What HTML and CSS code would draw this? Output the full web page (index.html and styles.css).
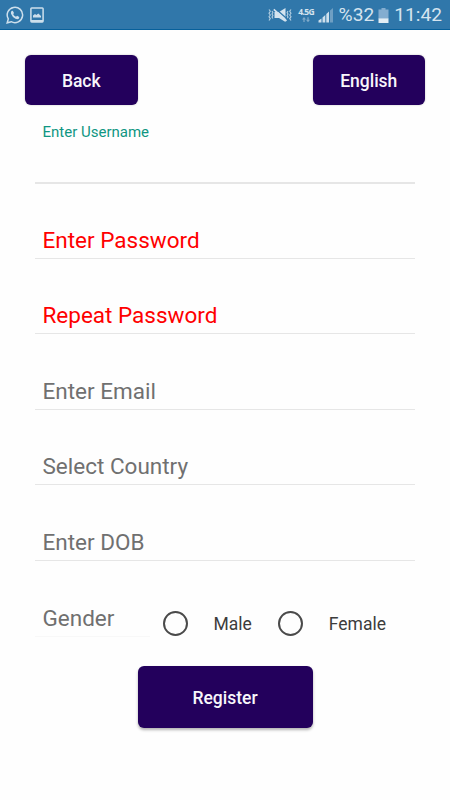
FILE: index.html
```html
<!DOCTYPE html>
<html lang="en">
<head>
	<meta charset="utf-8">
	<meta name="viewport" content="width=device-width, initial-scale=1">
	<title>Register</title>
	<link rel="stylesheet" href="styles.css">
</head>
<body>

<div class="statusbar">
	<div class="notifications">
		<svg width="18" height="18" viewBox="0 0 18 18" fill="none" stroke="#cddfec" stroke-width="1.5">
			<path d="M1.2 16.8 2.3 12.9A7.7 7.7 0 1 1 5.2 15.7Z"/>
			<path fill="#cddfec" stroke="none" d="M5.5 5.1 6.8 4.7 8 7 7.2 8.2Q8.1 10 10 10.8L11.1 9.8 13.3 11 13 12.4Q11.8 13.7 9.5 12.7 6.3 11.3 5 7.8 4.6 6.2 5.5 5.1Z"/>
		</svg>
		<svg width="14" height="16" viewBox="0 0 14 16">
			<rect x="0.9" y="0.9" width="12.2" height="14" rx="0.8" fill="none" stroke="#cddfec" stroke-width="1.5"/>
			<path fill="#cddfec" d="M3 10.5V8.5L5 7 6.4 8 8.3 6.5 11 9V10.5ZM1 13H13V15H1Z"/>
		</svg>
	</div>
	<div class="phone-state">
		<svg class="mute" width="24" height="16" viewBox="0 0 24 16" fill="none" stroke="#b5cfe1" stroke-width="1.1">
			<path d="M1 2.5 2.3 4.3 1 6.2 2.3 8 1 9.8 2.3 11.6 1 13.5M4 4 4.9 5.5 4 7 4.9 8.5 4 10 4.9 11.5M23 2.5 21.7 4.3 23 6.2 21.7 8 23 9.8 21.7 11.6 23 13.5M20 4 19.1 5.5 20 7 19.1 8.5 20 10 19.1 11.5"/>
			<path fill="#d5e4ef" stroke="none" d="M6.5 5H11L17.5 1V15L11 11H6.5Z"/>
			<path stroke="#3077aa" stroke-width="1.3" d="M7 1.3 19.5 12.3"/>
			<path stroke="#d5e4ef" stroke-width="1.6" d="M5.8 2.3 18.5 13.8"/>
		</svg>
		<div class="network">
			<span>4.5G</span>
			<svg width="8" height="6" viewBox="0 0 8 6" fill="#80abca">
				<path d="M2 0 4 2.5H2.6V5H1.4V2.5H0ZM6 5.2 4 2.7H5.4V0.2H6.6V2.7H8Z"/>
			</svg>
		</div>
		<svg class="signal" width="16" height="16" viewBox="0 0 16 16">
			<path fill="#cddfec" d="M0.5 13.5 3.5 11.5V15.5H0.5ZM4.5 10.5 7.3 8V15.5H4.5ZM8.3 7 11 4.5V15.5H8.3Z"/>
			<path fill="#6e9fc3" d="M12 3.5 15 1V15.5H12Z"/>
		</svg>
		<span class="percent">%32</span>
		<svg class="battery" width="11" height="15" viewBox="0 0 11 15">
			<path fill="#83add0" d="M3.5 0H7.5V1.5H10.5V10.5H0.5V1.5H3.5Z"/>
			<path fill="#e2edf4" d="M0.5 10.3H10.5V15H0.5Z"/>
		</svg>
		<span class="clock">11:42</span>
	</div>
</div>

<form name="Register">
	<div class="topbar">
		<button type="button">Back</button>
		<button type="button">English</button>
	</div>

	<div class="container">
		<div class="field active"><label>Enter Username</label></div>
		<div class="field error"><label>Enter Password</label></div>
		<div class="field error"><label>Repeat Password</label></div>
		<div class="field"><label>Enter Email</label></div>
		<div class="field"><label>Select Country</label></div>
		<div class="field"><label>Enter DOB</label></div>
		<div class="gender">
			<div class="field"><label>Gender</label></div>
			<label class="option"><input type="radio" name="gender" value="male">Male</label>
			<label class="option"><input type="radio" name="gender" value="female">Female</label>
		</div>
	</div>

	<button type="button" class="registerbtn">Register</button>
</form>

</body>
</html>
```

FILE: styles.css
```css
* {
    box-sizing: border-box;
}

body {
    margin: 0;
    min-height: 800px;
    background-color: #fefefe;
    font-family: Roboto, "Liberation Sans", sans-serif;
}

/* phone status bar */
.statusbar {
    display: flex;
    justify-content: space-between;
    height: 30px;
    padding: 1px 8px 0 6px;
    background-color: #3077aa;
    border-bottom: 1px solid #07609b;
    color: #d5e4ef;
}

.notifications, .phone-state {
    display: flex;
    align-items: center;
}

.notifications {
    gap: 6px;
}

.mute {
    margin-right: 6px;
}

.network {
    display: flex;
    flex-direction: column;
    align-items: center;
    width: 17px;
    margin-right: 3px;
    font-family: "Open Sans", Roboto, sans-serif;
    font-size: 8.5px;
    font-weight: bold;
    letter-spacing: -0.6px;
    line-height: 9px;
}

.network svg {
    margin-top: 1px;
}

.percent, .clock {
    font-size: 19.2px;
    line-height: 28px;
}

.percent {
    margin-left: 5px;
}

.battery {
    margin: 0 5px 0 4px;
}

button {
    width: 112.5px;
    height: 50px;
    padding: 1px 0 0;
    border: none;
    border-radius: 6px;
    background-color: #23005c;
    box-shadow: 0 0 2px rgba(0, 0, 0, 0.25);
    color: #f8f6fb;
    font-family: inherit;
    font-size: 17.5px;
    font-weight: 500;
    cursor: pointer;
}

.topbar {
    display: flex;
    justify-content: space-between;
    padding: 25px 25px 0;
}

.container {
    padding: 0 35px;
}

.field {
    display: flex;
    align-items: flex-end;
    height: 75.6px;
    padding: 0 7.5px 5px;
    border-bottom: 1px solid #e6e6e6;
    color: #707070;
    font-size: 22.5px;
    line-height: 26px;
}

.field.error {
    color: #ff0000;
}

/* focused field, the label moves above the line */
.field.active {
    align-items: flex-start;
    height: 79px;
    margin-bottom: -1px;
    padding-top: 18px;
    border-bottom: 2px solid #e6e6e6;
    color: #0f9682;
    font-size: 15px;
    line-height: 18px;
}

.gender {
    display: flex;
    align-items: flex-end;
}

.gender .field {
    width: 115px;
    margin-right: 12.5px;
    border-bottom-color: #f8f8f8;
}

.option {
    display: flex;
    align-items: center;
    height: 26px;
    margin-right: 26px;
    color: #3c3c3c;
    font-size: 17.5px;
}

.option input {
    appearance: none;
    width: 25px;
    height: 25px;
    margin: 0 26px 0 0;
    border: 2.5px solid #4a4a4a;
    border-radius: 50%;
}

.registerbtn {
    display: block;
    width: 175px;
    height: 62px;
    margin: 29px auto 0;
    padding-top: 2px;
    box-shadow: 0 2px 3px rgba(0, 0, 0, 0.3);
}
```
